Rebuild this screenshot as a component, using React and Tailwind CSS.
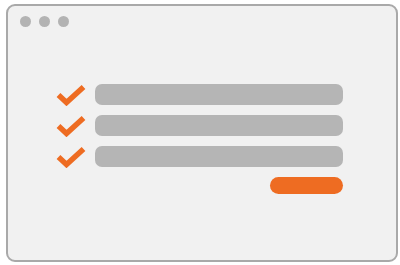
export default function App() {
  const rows = [0, 1, 2];
  return (
    <div className="w-[400px] h-[265px] bg-white pt-[4px] pl-[6px]">
      <div className="w-[392px] h-[258px] rounded-[9px] border-[2.5px] border-[#a9a9a9] bg-[#f1f1f1] flex flex-col">
        {/* window dots */}
        <div className="flex gap-[8px] pl-[12px] pt-[10px]">
          <span className="w-[11px] h-[11px] rounded-full bg-[#b3b3b3]" />
          <span className="w-[11px] h-[11px] rounded-full bg-[#b3b3b3]" />
          <span className="w-[11px] h-[11px] rounded-full bg-[#b3b3b3]" />
        </div>

        <div className="flex flex-col gap-[10px] pl-[48px] pt-[57px] w-[335px]">
          {rows.map((r) => (
            <div key={r} className="flex items-center gap-[9px] h-[21px]">
              <svg width="30" height="22" viewBox="0 0 30 22" className="shrink-0">
                <path d="M2.5 11 L10.5 18.5 L27.5 3" fill="none" stroke="#ee6c22" strokeWidth="5.5" />
              </svg>
              <div className="flex-1 h-[21px] rounded-[7px] bg-[#b5b5b5]" />
            </div>
          ))}
          <div className="flex justify-end">
            <div className="w-[73px] h-[17px] rounded-full bg-[#ee6c22]" />
          </div>
        </div>
      </div>
    </div>
  );
}
